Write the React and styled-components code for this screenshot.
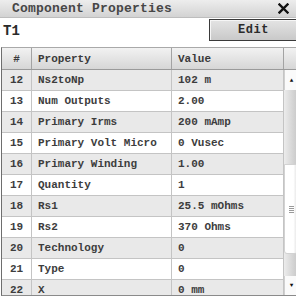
import React from 'react';
import styled, { createGlobalStyle } from 'styled-components';

const GlobalStyle = createGlobalStyle`
  html, body {
    margin: 0;
    padding: 0;
    background: #fff;
  }
  body {
    font-family: 'Liberation Mono', 'DejaVu Sans Mono', monospace;
  }
`;

const Panel = styled.div`
  width: 296px;
  height: 297px;
  overflow: hidden;
  display: flex;
  flex-direction: column;
  background: #fff;
`;

const TitleBar = styled.div`
  height: 18px;
  flex: none;
  display: flex;
  align-items: center;
  justify-content: space-between;
  padding: 0 7px 0 12px;
  background: linear-gradient(to bottom, #ededed, #d3d3d3);
  border-bottom: 1px solid #bdbdbd;
  box-sizing: border-box;
`;

const Title = styled.span`
  font-size: 13px;
  font-weight: bold;
  color: #474747;
  letter-spacing: 0.2px;
`;

const NameRow = styled.div`
  height: 29px;
  flex: none;
  display: flex;
  align-items: flex-start;
  justify-content: space-between;
  padding-top: 1px;
  box-sizing: border-box;
`;

const NameText = styled.span`
  font-size: 14px;
  font-weight: bold;
  color: #2a2a2a;
  padding: 4px 0 0 3px;
`;

const EditButton = styled.button`
  width: 88px;
  height: 22px;
  margin: 0 -1px 0 0;
  border: 1px solid #3a3a3a;
  border-right: none;
  background: linear-gradient(to bottom, #e4e4e4, #c9c9c9);
  box-shadow: inset 1px 1px 0 #f6f6f6;
  font-family: inherit;
  font-size: 12px;
  font-weight: bold;
  color: #2b2b2b;
  padding: 0;
  letter-spacing: 0.5px;
`;

const Table = styled.div`
  margin-left: 1px;
  height: 249px;
  box-sizing: border-box;
  border-top: 1px solid #a9a9a9;
  border-left: 1px solid #6e6e6e;
  border-bottom: 1px solid #8a8a8a;
  display: flex;
  flex-direction: column;
  overflow: hidden;
`;

const cols = '30px 140px 112px 14px';

const HeaderRow = styled.div`
  display: grid;
  grid-template-columns: ${cols};
  height: 22px;
  flex: none;
  box-sizing: border-box;
  border-bottom: 1px solid #9a9a9a;
  background: linear-gradient(to bottom, #f2f2f2, #d6d6d6);
`;

const HeadCell = styled.div`
  display: flex;
  align-items: center;
  justify-content: ${p => (p.$center ? 'center' : 'flex-start')};
  padding-left: ${p => (p.$center ? '0' : '6px')};
  border-right: 1px solid #a3a3a3;
  font-size: 11px;
  font-weight: bold;
  color: #3a3a3a;
`;

const Body = styled.div`
  display: flex;
  flex: 1;
  min-height: 0;
`;

const Rows = styled.div`
  width: 282px;
  flex: none;
  display: flex;
  flex-direction: column;
`;

const Row = styled.div`
  display: grid;
  grid-template-columns: 30px 140px 112px;
  height: 21px;
  flex: none;
  box-sizing: border-box;
  border-bottom: 1px solid #c4c4c4;
  background: ${p => (p.$shaded ? '#e9e9e9' : '#fff')};
`;

const Cell = styled.div`
  display: flex;
  align-items: center;
  justify-content: ${p => (p.$center ? 'center' : 'flex-start')};
  padding-left: ${p => (p.$center ? '0' : '6px')};
  border-right: 1px solid #c4c4c4;
  font-size: 11px;
  font-weight: bold;
  color: #3d3d3d;
  white-space: nowrap;
  overflow: hidden;
`;

const Scrollbar = styled.div`
  width: 14px;
  flex: none;
  display: flex;
  flex-direction: column;
  background: linear-gradient(to right, #ececec, #c6c6c6);
`;

const ArrowButton = styled.div`
  height: ${p => p.$h}px;
  flex: none;
  display: flex;
  align-items: center;
  justify-content: center;
  background: #fafafa;
  border-left: 1px solid #d0d0d0;
  box-sizing: border-box;
  font-size: 6px;
  color: #111;
`;

const Track = styled.div`
  flex: 1;
  display: flex;
  flex-direction: column;
`;

const TrackGap = styled.div`
  height: ${p => p.$h}px;
  flex: none;
`;

const Thumb = styled.div`
  height: ${p => p.$h}px;
  flex: none;
  background: linear-gradient(to right, #ffffff 70%, #e2e2e2);
  border: 1px solid #d2d2d2;
  border-radius: 0 0 3px 3px;
  box-sizing: border-box;
  display: flex;
  align-items: center;
  justify-content: center;
`;

const Grip = styled.div`
  width: 5px;
  height: 7px;
  background: repeating-linear-gradient(to bottom, #9a9a9a 0 1px, transparent 1px 2px);
`;

const data = [
  ['12', 'Ns2toNp', '102 m'],
  ['13', 'Num Outputs', '2.00'],
  ['14', 'Primary Irms', '200 mAmp'],
  ['15', 'Primary Volt Micro', '0 Vusec'],
  ['16', 'Primary Winding', '1.00'],
  ['17', 'Quantity', '1'],
  ['18', 'Rs1', '25.5 mOhms'],
  ['19', 'Rs2', '370 Ohms'],
  ['20', 'Technology', '0'],
  ['21', 'Type', '0'],
  ['22', 'X', '0 mm'],
];

const CloseIcon = () => (
  <svg width="11" height="11" viewBox="0 0 11 11">
    <path d="M1.5 1.5 L9.5 9.5 M9.5 1.5 L1.5 9.5" stroke="#111" strokeWidth="2.4" strokeLinecap="square" />
  </svg>
);

const App = () => {
  return (
    <Panel>
      <GlobalStyle />
      <TitleBar>
        <Title>Component Properties</Title>
        <CloseIcon />
      </TitleBar>
      <NameRow>
        <NameText>T1</NameText>
        <EditButton>Edit</EditButton>
      </NameRow>
      <Table>
        <HeaderRow>
          <HeadCell $center>#</HeadCell>
          <HeadCell>Property</HeadCell>
          <HeadCell>Value</HeadCell>
          <HeadCell />
        </HeaderRow>
        <Body>
          <Rows>
            {data.map(([n, prop, val]) => (
              <Row key={n} $shaded={Number(n) % 2 === 0}>
                <Cell $center>{n}</Cell>
                <Cell>{prop}</Cell>
                <Cell>{val}</Cell>
              </Row>
            ))}
          </Rows>
          <Scrollbar>
            <ArrowButton $h={20}>▲</ArrowButton>
            <Track>
              <TrackGap $h={74} />
              <Thumb $h={90}>
                <Grip />
              </Thumb>
            </Track>
            <ArrowButton $h={19}>▼</ArrowButton>
          </Scrollbar>
        </Body>
      </Table>
    </Panel>
  );
};

export default App;
